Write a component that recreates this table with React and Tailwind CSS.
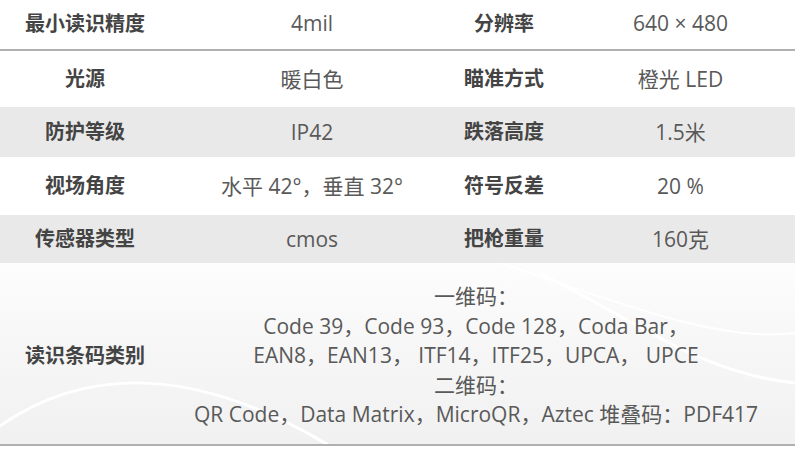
const rows = [
  { a: '最小读识精度', b: '4mil', c: '分辨率', d: '640 × 480', h: 'h-[51px]', bg: 'bg-white', line: true },
  { a: '光源', b: '暖白色', c: '瞄准方式', d: '橙光 LED', h: 'h-[56px]', bg: 'bg-white' },
  { a: '防护等级', b: 'IP42', c: '跌落高度', d: '1.5米', h: 'h-[50px]', bg: 'bg-[#e9e9e9]' },
  { a: '视场角度', b: '水平 42°，垂直 32°', c: '符号反差', d: '20 %', h: 'h-[58px]', bg: 'bg-white' },
  { a: '传感器类型', b: 'cmos', c: '把枪重量', d: '160克', h: 'h-[48px]', bg: 'bg-[#e9e9e9]' },
];

const Row = ({ r }) => (
  <div className={`flex items-center ${r.h} ${r.bg} ${r.line ? 'border-b-2 border-[#b0b0b0] pb-[2px]' : ''}`}>
    <div className="w-[170px] text-center font-bold text-[20px] text-[#444]">{r.a}</div>
    <div className="w-[284px] text-center text-[#595959]">{r.b}</div>
    <div className="w-[100px] text-center font-bold text-[20px] text-[#444]">{r.c}</div>
    <div className="w-[241px] pl-[12px] text-center text-[#595959]">{r.d}</div>
  </div>
);

export default function App() {
  return (
    <div
      className="w-[800px] h-[451px] bg-white overflow-hidden text-[21px] leading-none"
      style={{ fontFamily: '"Open Sans", "Noto Sans CJK SC", sans-serif' }}
    >
      <div className="w-[795px]">
        {rows.map((r, i) => (
          <Row key={i} r={r} />
        ))}
        <div className="relative flex items-center h-[183px] pt-[5px] border-b-2 border-[#b0b0b0] bg-gradient-to-b from-[#fdfdfd] via-[#f6f6f6] to-[#f1f1f1] overflow-hidden">
          {/* soft wave decoration */}
          <svg className="absolute inset-0" width="795" height="183" viewBox="0 0 795 183" fill="none">
            <path d="M-20 178 C 80 95, 200 105, 330 183" stroke="#ffffff" strokeWidth="3" />
            <path d="M540 10 C 640 60, 700 110, 795 120" stroke="#ffffff" strokeWidth="3" />
            <path d="M500 0 C 620 40, 720 80, 795 70" stroke="#ffffff" strokeWidth="2" />
          </svg>
          <div className="relative w-[170px] text-center font-bold text-[20px] text-[#444]">读识条码类别</div>
          <div className="relative w-[612px] text-center text-[#595959] leading-[29.5px]">
            <div>一维码：</div>
            <div>Code 39，Code 93，Code 128，Coda Bar，</div>
            <div>EAN8，EAN13， ITF14，ITF25，UPCA， UPCE</div>
            <div>二维码：</div>
            <div>QR Code，Data Matrix，MicroQR，Aztec 堆叠码：PDF417</div>
          </div>
        </div>
      </div>
    </div>
  );
}
